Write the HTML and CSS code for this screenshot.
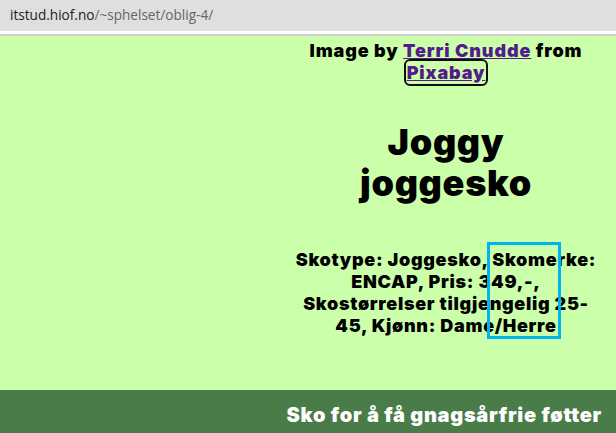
FILE: index.html
```html
<!DOCTYPE html>
<html lang="no">
<head>
<meta charset="utf-8">
<title>Joggy joggesko</title>
<link rel="stylesheet" href="styles.css">
</head>
<body>
<div class="urlbar"><span class="host">itstud.hiof.no</span><span class="path">/~sphelset/oblig-4/</span></div>
<div class="urlgap"></div>
<div class="page">
  <main class="main">
    <div class="left"></div>
    <section class="info">
      <p class="credit">Image by <a class="link" href="#">Terri Cnudde</a> from <a class="link focus" href="#">Pixabay</a></p>
      <h1 class="title">Joggy joggesko</h1>
      <p class="desc">Skotype: Joggesko, Skomerke: ENCAP, Pris: 349,-, Skostørrelser tilgjengelig 25-45, Kjønn: Dame/Herre</p>
    </section>
  </main>
  <footer class="footer">Sko for å få gnagsårfrie føtter</footer>
</div>
<div class="highlight"></div>
</body>
</html>
```
FILE: styles.css
```css
html, body {
  margin: 0;
  padding: 0;
}
body {
  width: 616px;
  height: 433px;
  overflow: hidden;
  position: relative;
  background: #ccffaa;
  font-family: Inter, "Liberation Sans", Arial, sans-serif;
}
.urlbar {
  height: 31px;
  background: #dfdfdf;
  box-sizing: border-box;
  padding: 5px 0 0 10px;
  font-family: "Open Sans", "Noto Sans", sans-serif;
  font-size: 13.6px;
  line-height: 20px;
}
.host { color: #222; }
.path { color: #666; }
.urlgap {
  height: 3px;
  background: #ffffff;
  border-bottom: 2px solid #cfcfcf;
}
.page {
  background: #ccffaa;
}
.main {
  display: grid;
  grid-template-columns: 1fr 306px;
  padding-right: 17px;
  height: 354px;
}
.info {
  text-align: center;
  font-weight: 900;
  font-size: 18px;
  letter-spacing: 0.038em;
}
.credit {
  margin: 4px 0 0;
  line-height: 22px;
  letter-spacing: 0.05em;
}
.link { color: #551a8b; }
.focus {
  outline: 2px solid #101010;
  outline-offset: 1px;
  border-radius: 3px;
}
.title {
  font-size: 36px;
  font-weight: 900;
  margin: 38px 0 0;
  padding: 0 24px;
  line-height: 41px;
}
.desc {
  margin: 45px 0 0;
  line-height: 22px;
}
.footer {
  background: #4a7c4a;
  color: #ffffff;
  font-weight: 900;
  font-size: 20px;
  letter-spacing: 0.035em;
  text-align: right;
  padding: 12px 14px 20px;
  line-height: 26px;
}
.highlight {
  position: absolute;
  left: 487px;
  top: 242px;
  width: 68px;
  height: 91px;
  border: 3px solid #00b4ef;
}
```
